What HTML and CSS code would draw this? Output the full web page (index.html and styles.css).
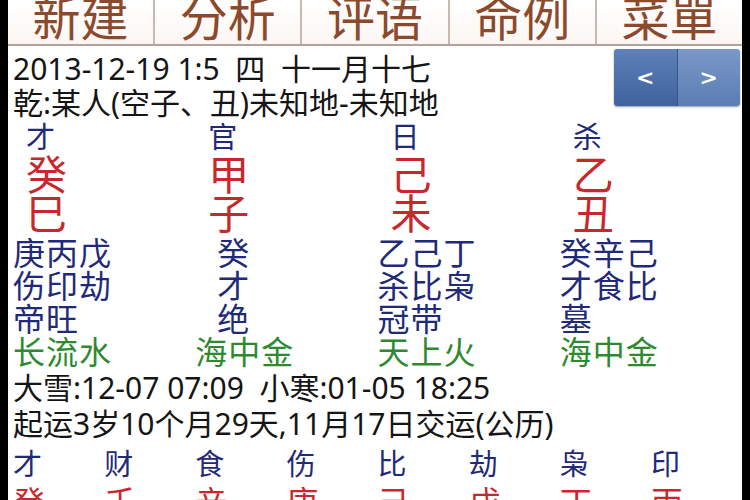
FILE: index.html
```html
<!DOCTYPE html>
<html lang="zh-CN">
<head>
  <meta charset="UTF-8">
  <meta name="viewport" content="width=device-width, initial-scale=1.0">
  <title>八字排盘</title>
  <link rel="stylesheet" href="styles.css">
</head>
<body>
  <div class="screen">
    <div class="tabs">
      <div class="tab">新建</div>
      <div class="tab">分析</div>
      <div class="tab">评语</div>
      <div class="tab">命例</div>
      <div class="tab">菜單</div>
    </div>

    <div class="head">
      <div class="info">
        <div class="line">2013-12-19 1:5&nbsp; 四&nbsp; 十一月十七</div>
        <div class="line">乾:某人(空子、丑)未知地-未知地</div>
      </div>
      <div class="nav">
        <span class="nav-btn prev">&lt;</span>
        <span class="nav-btn next">&gt;</span>
      </div>
    </div>

    <!-- four pillars -->
    <div class="pillars">
      <div class="pillar">
        <div class="god">才</div>
        <div class="gz">癸</div>
        <div class="gz">巳</div>
        <div class="hide">庚丙戊</div>
        <div class="hide">伤印劫</div>
        <div class="hide">帝旺</div>
        <div class="nayin">长流水</div>
      </div>
      <div class="pillar">
        <div class="god">官</div>
        <div class="gz">甲</div>
        <div class="gz">子</div>
        <div class="hide single">癸</div>
        <div class="hide single">才</div>
        <div class="hide single">绝</div>
        <div class="nayin">海中金</div>
      </div>
      <div class="pillar">
        <div class="god">日</div>
        <div class="gz">己</div>
        <div class="gz">未</div>
        <div class="hide">乙己丁</div>
        <div class="hide">杀比枭</div>
        <div class="hide">冠带</div>
        <div class="nayin">天上火</div>
      </div>
      <div class="pillar">
        <div class="god">杀</div>
        <div class="gz">乙</div>
        <div class="gz">丑</div>
        <div class="hide">癸辛己</div>
        <div class="hide">才食比</div>
        <div class="hide">墓</div>
        <div class="nayin">海中金</div>
      </div>
    </div>

    <div class="line jq">大雪:12-07 07:09&nbsp; 小寒:01-05 18:25</div>
    <div class="line">起运3岁10个月29天,11月17日交运(公历)</div>

    <!-- da yun -->
    <div class="yun">
      <div class="yun-col"><div class="god">才</div><div class="gz">癸</div></div>
      <div class="yun-col"><div class="god">财</div><div class="gz">壬</div></div>
      <div class="yun-col"><div class="god">食</div><div class="gz">辛</div></div>
      <div class="yun-col"><div class="god">伤</div><div class="gz">庚</div></div>
      <div class="yun-col"><div class="god">比</div><div class="gz">己</div></div>
      <div class="yun-col"><div class="god">劫</div><div class="gz">戊</div></div>
      <div class="yun-col"><div class="god">枭</div><div class="gz">丁</div></div>
      <div class="yun-col"><div class="god">印</div><div class="gz">丙</div></div>
    </div>
  </div>
</body>
</html>
```

FILE: styles.css
```css
html, body {
  margin: 0;
  height: 100%;
  background: #000;
  overflow: hidden;
}

body {
  font-family: "Noto Sans", "Noto Sans CJK SC", sans-serif;
  color: #151515;
}

.screen {
  margin: 0 8px;
  height: 100%;
  background: #fff;
  overflow: hidden;
}

/* top tab bar */
.tabs {
  display: flex;
  height: 44px;
  border-bottom: 2px solid #b8a09a;
  background: linear-gradient(#fff, #fbf6f3);
}

.tab {
  flex: 1;
  text-align: center;
  font-size: 48px;
  line-height: 36px;
  color: #8c4a2c;
  border-right: 2px solid #cbb7b0;
  overflow: hidden;
}

.tab:last-child {
  border-right: none;
}

.head {
  display: flex;
  justify-content: space-between;
  padding: 6px 2px 0 5px;
}

.line {
  font-size: 30px;
  line-height: 34px;
  padding-left: 5px;
  white-space: nowrap;
}

.info .line {
  padding-left: 0;
}

.nav {
  display: flex;
  width: 126px;
  height: 57px;
  margin-top: -3px;
  border-radius: 3px;
  overflow: hidden;
  box-shadow: 0 1px 2px rgba(0, 0, 0, 0.4);
}

.nav-btn {
  flex: 1;
  display: flex;
  align-items: center;
  justify-content: center;
  color: #fff;
  font-family: "DejaVu Sans", sans-serif;
  font-size: 22px;
  font-weight: bold;
}

.prev {
  background: linear-gradient(#5f80b8, #3f639d);
  border-right: 1px solid #34578f;
}

.next {
  background: linear-gradient(#7a98c8, #5b7db3);
}

/* pillars */
.pillars {
  display: grid;
  grid-template-columns: repeat(4, 1fr);
  padding-left: 5px;
}

.god {
  font-size: 29px;
  line-height: 34px;
  color: #1f2a78;
}

.pillar .god,
.pillar .gz {
  padding-left: 13px;
}

.gz {
  font-size: 41px;
  line-height: 40px;
  color: #c8282c;
}

.pillar .gz + .gz {
  line-height: 38px;
  margin-bottom: 4px;
}

.hide {
  font-size: 32px;
  line-height: 33px;
  color: #1f2a78;
  letter-spacing: 1px;
}

.hide.single {
  padding-left: 22px;
}

.nayin {
  font-size: 32px;
  line-height: 33px;
  color: #2f8a2f;
  letter-spacing: 1px;
}

.jq {
  margin-top: 1px;
  line-height: 38px;
}

/* da yun row */
.yun {
  display: grid;
  grid-template-columns: repeat(8, 1fr);
  padding-left: 5px;
  margin-top: 4px;
}

.yun .god {
  line-height: 38px;
}

.yun .gz {
  font-size: 32px;
  line-height: 38px;
}
```
